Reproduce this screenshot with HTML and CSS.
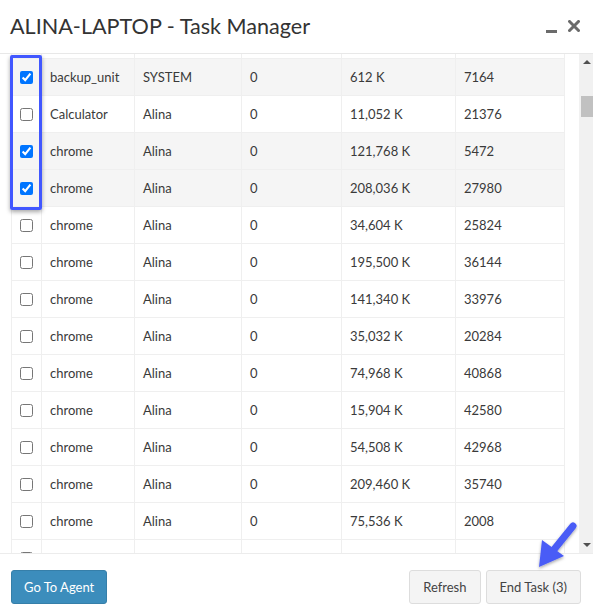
FILE: index.html
```html
<!DOCTYPE html>
<html>
<head>
<meta charset="utf-8">
<link rel="stylesheet" href="styles.css">
</head>
<body>
<div class="modal">
  <div class="header">
    <div class="title">ALINA-LAPTOP - Task Manager</div>
    <div class="tools">
      <span class="minimize"></span>
      <svg class="close" width="12" height="12" viewBox="0 0 12 12"><path d="M1.5 1.5 L10.5 10.5 M10.5 1.5 L1.5 10.5" stroke="#6b6b6b" stroke-width="3" stroke-linecap="square"/></svg>
    </div>
  </div>
  <div class="body">
    <div class="table-wrap">
      <table class="grid">
        <colgroup><col class="c1"><col class="c2"><col class="c3"><col class="c4"><col class="c5"><col class="c6"></colgroup>
        <tr class="tail"><td></td><td></td><td></td><td></td><td></td><td></td></tr>
        <tr class="sel"><td class="cb"><input type="checkbox" checked></td><td>backup_unit</td><td>SYSTEM</td><td>0</td><td>612 K</td><td>7164</td></tr>
        <tr><td class="cb"><input type="checkbox"></td><td>Calculator</td><td>Alina</td><td>0</td><td>11,052 K</td><td>21376</td></tr>
        <tr class="sel"><td class="cb"><input type="checkbox" checked></td><td>chrome</td><td>Alina</td><td>0</td><td>121,768 K</td><td>5472</td></tr>
        <tr class="sel"><td class="cb"><input type="checkbox" checked></td><td>chrome</td><td>Alina</td><td>0</td><td>208,036 K</td><td>27980</td></tr>
        <tr><td class="cb"><input type="checkbox"></td><td>chrome</td><td>Alina</td><td>0</td><td>34,604 K</td><td>25824</td></tr>
        <tr><td class="cb"><input type="checkbox"></td><td>chrome</td><td>Alina</td><td>0</td><td>195,500 K</td><td>36144</td></tr>
        <tr><td class="cb"><input type="checkbox"></td><td>chrome</td><td>Alina</td><td>0</td><td>141,340 K</td><td>33976</td></tr>
        <tr><td class="cb"><input type="checkbox"></td><td>chrome</td><td>Alina</td><td>0</td><td>35,032 K</td><td>20284</td></tr>
        <tr><td class="cb"><input type="checkbox"></td><td>chrome</td><td>Alina</td><td>0</td><td>74,968 K</td><td>40868</td></tr>
        <tr><td class="cb"><input type="checkbox"></td><td>chrome</td><td>Alina</td><td>0</td><td>15,904 K</td><td>42580</td></tr>
        <tr><td class="cb"><input type="checkbox"></td><td>chrome</td><td>Alina</td><td>0</td><td>54,508 K</td><td>42968</td></tr>
        <tr><td class="cb"><input type="checkbox"></td><td>chrome</td><td>Alina</td><td>0</td><td>209,460 K</td><td>35740</td></tr>
        <tr><td class="cb"><input type="checkbox"></td><td>chrome</td><td>Alina</td><td>0</td><td>75,536 K</td><td>2008</td></tr>
        <tr><td class="cb"><input type="checkbox"></td><td>chrome</td><td>Alina</td><td>0</td><td>36,120 K</td><td>19904</td></tr>
      </table>
      <div class="highlight"></div>
    </div>
    <div class="scrollbar">
      <div class="arrow up"></div>
      <div class="thumb"></div>
      <div class="spacer"></div>
      <div class="arrow down"></div>
    </div>
  </div>
  <div class="footer">
    <button class="btn primary">Go To Agent</button>
    <div class="right">
      <button class="btn">Refresh</button>
      <button class="btn">End Task (3)</button>
    </div>
  </div>
  <svg class="pointer" width="60" height="60" viewBox="530 515 60 60">
    <defs>
      <filter id="sh" x="-30%" y="-30%" width="160%" height="160%"><feDropShadow dx="0" dy="1.5" stdDeviation="1.5" flood-color="#000" flood-opacity="0.35"/></filter>
    </defs>
    <g filter="url(#sh)">
      <line x1="573" y1="526" x2="552" y2="552" stroke="#4a5cf6" stroke-width="7" stroke-linecap="round"/>
      <polygon points="539,567 542,540 564,556" fill="#4a5cf6"/>
    </g>
  </svg>
</div>
</body>
</html>
```
FILE: styles.css
```css
* { box-sizing: border-box; }
html, body { margin: 0; padding: 0; overflow: hidden; }
body {
  width: 593px;
  height: 613px;
  background: #fff;
  font-family: Lato, "Open Sans", sans-serif;
  color: #3a3a3a;
}
.modal { position: relative; width: 593px; height: 613px; }
.header {
  height: 54px;
  border-bottom: 1px solid #e8e8e8;
  display: flex;
  align-items: center;
  justify-content: space-between;
  padding: 0 13px 0 10px;
}
.title { font-size: 21.6px; color: #333; padding-bottom: 1px; letter-spacing: 0; }
.tools { display: flex; align-items: flex-start; gap: 11px; height: 20px; padding-top: 2px; }
.minimize { display: block; width: 11px; height: 3px; background: #6b6b6b; margin-top: 11px; }
.close { display: block; margin-top: 1px; }
.body { display: flex; height: 499px; overflow: hidden; }
.table-wrap { position: relative; padding-left: 11px; width: 579px; padding-right: 16px; overflow: hidden; }
.grid {
  border-collapse: collapse;
  table-layout: fixed;
  width: 553px;
  font-size: 13px;
  margin-top: -1px;
}
.c1 { width: 30px; } .c2 { width: 93px; } .c3 { width: 107px; } .c4 { width: 100px; } .c5 { width: 114px; } .c6 { width: 109px; }
.grid td {
  border: 1px solid #efefef;
  height: 37px;
  padding: 0 8px;
  white-space: nowrap;
  vertical-align: middle;
}
.grid tr.tail td { height: 5px; }
.grid tr.sel td { background: #f5f5f5; }
.grid td.cb { padding: 0; text-align: center; }
.grid input { margin: 0; width: 13px; height: 13px; vertical-align: middle; position: relative; top: -1px; left: 0px; }
.highlight {
  position: absolute;
  left: 10px;
  top: 1px;
  width: 32px;
  height: 155px;
  border: 3px solid #4157ff;
  border-radius: 2px;
  box-shadow: 0 2px 4px rgba(0,0,0,0.35);
}
.scrollbar {
  width: 14px;
  background: #f1f1f1;
  display: flex;
  flex-direction: column;
  align-items: stretch;
}
.arrow { height: 17px; position: relative; }
.arrow::after {
  content: "";
  position: absolute;
  left: 4px;
  border-left: 4px solid transparent;
  border-right: 4px solid transparent;
}
.arrow.up::after { top: 6px; border-bottom: 4px solid #505050; }
.arrow.down::after { top: 7px; border-top: 4px solid #505050; }
.thumb { height: 21px; margin: 25px 0 0 2px; background: #c1c1c1; }
.spacer { flex: 1; }
.footer {
  border-top: 1px solid #ececec;
  display: flex;
  justify-content: space-between;
  padding: 16px 12px 0 11px;
}
.right { display: flex; gap: 5px; }
.btn {
  height: 34px;
  font-family: Lato, "Open Sans", sans-serif;
  font-size: 13px;
  padding: 0 13px;
  border-radius: 3px;
  border: 1px solid #ddd;
  background: #f4f4f4;
  color: #444;
}
.btn.primary { background: #3c8dbc; border-color: #367fa9; color: #fff; padding: 0 12px; }
.pointer { position: absolute; left: 530px; top: 515px; }
```
